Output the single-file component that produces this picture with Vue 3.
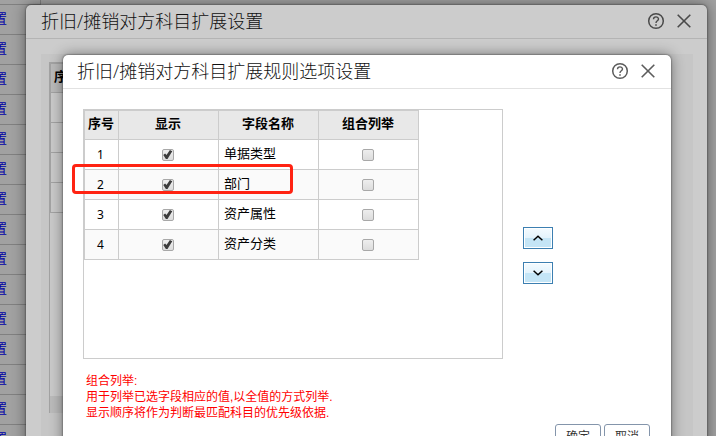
<script setup>
import { ref } from 'vue'

const links = Array.from({ length: 16 }, (_, i) => i)
const fields = ref([
  { name: '单据类型', shown: true, combined: false },
  { name: '部门', shown: true, combined: false },
  { name: '资产属性', shown: true, combined: false },
  { name: '资产分类', shown: true, combined: false },
])
</script>

<template>
  <div class="page">
    <nav class="links">
      <div class="link-row first"></div>
      <div v-for="n in links" :key="n" class="link-row"><a href="#">设置</a></div>
    </nav>

    <section class="dialog outer">
      <header class="bar">
        <h2>折旧/摊销对方科目扩展设置</h2>
        <button class="icon" aria-label="帮助">
          <svg width="18" height="18" viewBox="0 0 18 18" fill="none" stroke="currentColor">
            <circle cx="9" cy="9" r="7.3" stroke-width="1.5" />
            <path d="M6.5 7.3C6.5 4.1 11.5 4.2 11.5 7.1C11.5 8.8 9 8.9 9 11" stroke-width="1.4" />
            <path d="M9 12.2v1.6" stroke-width="1.6" />
          </svg>
        </button>
        <button class="icon" aria-label="关闭">
          <svg width="14" height="14" viewBox="0 0 14 14" fill="none" stroke="currentColor" stroke-width="1.6">
            <path d="M.7 .7L13.3 13.3M13.3 .7L.7 13.3" />
          </svg>
        </button>
      </header>
      <div class="backdrop-panel">
        <div class="backdrop-box">
          <table class="grid">
            <colgroup><col class="no" /><col /></colgroup>
            <thead><tr><th>序号</th><th></th></tr></thead>
            <tbody>
              <tr v-for="n in 4" :key="n"><td></td><td></td></tr>
            </tbody>
          </table>
          <div class="scroll"></div>
        </div>
      </div>
    </section>

    <section class="dialog inner">
      <header class="bar">
        <h2>折旧/摊销对方科目扩展规则选项设置</h2>
        <button class="icon" aria-label="帮助">
          <svg width="18" height="18" viewBox="0 0 18 18" fill="none" stroke="currentColor">
            <circle cx="9" cy="9" r="7.3" stroke-width="1.5" />
            <path d="M6.5 7.3C6.5 4.1 11.5 4.2 11.5 7.1C11.5 8.8 9 8.9 9 11" stroke-width="1.4" />
            <path d="M9 12.2v1.6" stroke-width="1.6" />
          </svg>
        </button>
        <button class="icon" aria-label="关闭">
          <svg width="14" height="14" viewBox="0 0 14 14" fill="none" stroke="currentColor" stroke-width="1.6">
            <path d="M.7 .7L13.3 13.3M13.3 .7L.7 13.3" />
          </svg>
        </button>
      </header>
      <div class="body">
        <div class="main">
          <div class="box">
            <table class="grid fields">
              <colgroup><col class="no" /><col /><col /><col /></colgroup>
              <thead>
                <tr><th>序号</th><th>显示</th><th>字段名称</th><th>组合列举</th></tr>
              </thead>
              <tbody>
                <tr v-for="(f, i) in fields" :key="f.name">
                  <td class="mid num">{{ i + 1 }}</td>
                  <td class="mid"><input v-model="f.shown" type="checkbox" :aria-label="f.name + '显示'" /></td>
                  <td>{{ f.name }}</td>
                  <td class="mid"><input v-model="f.combined" type="checkbox" :aria-label="f.name + '组合列举'" /></td>
                </tr>
              </tbody>
            </table>
            <div class="highlight"></div>
          </div>
          <div class="movers">
            <button aria-label="上移">
              <svg width="10" height="6" viewBox="0 0 10 6" fill="none" stroke="#000" stroke-width="1.5"><path d="M.6 5.2L5 1.2L9.4 5.2" /></svg>
            </button>
            <button aria-label="下移">
              <svg width="10" height="6" viewBox="0 0 10 6" fill="none" stroke="#000" stroke-width="1.5"><path d="M.6 .8L5 4.8L9.4 .8" /></svg>
            </button>
          </div>
        </div>
        <p class="note">组合列举:<br />用于列举已选字段相应的值,以全值的方式列举.<br />显示顺序将作为判断最匹配科目的优先级依据.</p>
        <footer class="actions">
          <button>确定</button>
          <button>取消</button>
        </footer>
      </div>
    </section>
  </div>
</template>

<style>
body { overflow: hidden; }
</style>

<style scoped>
* { box-sizing: border-box; }
.page {
  position: relative;
  height: 100vh;
  overflow: hidden;
  background: #a1a1a1;
  font: 13px/20px "Liberation Sans", "Noto Sans CJK SC", sans-serif;
  color: #000;
}
button { font: inherit; cursor: pointer; padding: 0; }
.links { width: 41px; }
.link-row {
  display: flex;
  justify-content: flex-end;
  align-items: center;
  height: 30px;
  padding: 0 33px 2px 0;
  overflow: hidden;
  border-bottom: 1px solid #808080;
  border-right: 1px solid #808080;
}
.link-row.first { height: 5px; }
.link-row a { flex: none; color: #0000a8; text-decoration: none; }
.dialog {
  position: absolute;
  display: flex;
  flex-direction: column;
  border-radius: 5px;
  box-shadow: 0 0 2px rgba(0, 0, 0, .7), 0 0 14px rgba(0, 0, 0, .45);
}
.outer {
  inset: 5px 9px -40px 26px;
  background: #ccc;
}
.inner {
  inset: 55px 45px auto 63px;
  background: #fff;
}
.bar {
  display: flex;
  align-items: center;
  flex: none;
  height: 34px;
  padding: 0 16px 2px 14px;
  gap: 12px;
  border-bottom: 1px solid #e2e2e2;
}
.outer .bar { border-color: #b4b4b4; padding-left: 15px; }
h2 {
  flex: 1;
  margin: 0;
  font-family: "Open Sans", "Noto Sans CJK SC", sans-serif;
  font-size: 18px;
  font-weight: 300;
  line-height: 26px;
  color: #111;
  white-space: nowrap;
}
.icon {
  display: flex;
  border: 0;
  background: none;
  color: #5c5c5c;
}
.outer .icon { color: #4a4a4a; }
.backdrop-panel {
  flex: 1;
  margin: 15px 14px 0 15px;
  padding: 8px;
  background: #c6c6c6;
}
.backdrop-box {
  display: flex;
  flex-direction: column;
  width: 80%;
  height: 351px;
  border: 1px solid #a3a3a3;
  border-bottom: 0;
  background: #cacaca;
}
.grid {
  table-layout: fixed;
  border-spacing: 0;
  border-top: 1px solid #ccc;
  border-left: 1px solid #ccc;
}
.grid .no { width: 34px; }
.grid th, .grid td {
  height: 30px;
  padding: 0 5px 2px;
  border-right: 1px solid #ccc;
  border-bottom: 1px solid #ccc;
  line-height: 20px;
}
.grid th {
  height: 29px;
  padding: 0 1px 2px 0;
  background: #e8e8e8;
  font-weight: bold;
}
.grid .mid { padding: 0 2px 2px 0; text-align: center; }
.grid .num { padding-bottom: 0; font-family: "Noto Sans", sans-serif; font-size: 12px; }
.fields { width: 335px; background: #fff; }
.fields tbody tr:nth-child(even) { background: #fafafa; }
.backdrop-box .grid { width: 100%; border-color: #a3a3a3; }
.backdrop-box .grid th, .backdrop-box .grid td { border-color: #a3a3a3; }
.backdrop-box .grid th { background: #bababa; }
.scroll { height: 17px; margin-top: auto; background: #bbb; }
.body { padding: 20px; }
.main { display: flex; align-items: center; gap: 20px; }
.box {
  position: relative;
  flex: 0 1 420px;
  height: 250px;
  border: 1px solid #ccc;
}
.highlight {
  position: absolute;
  top: 54px;
  left: -12px;
  width: 221px;
  height: 30px;
  border: 3px solid #ff2312;
  border-radius: 4px;
}
input {
  appearance: none;
  display: block;
  width: 12px;
  height: 12px;
  margin: 2px auto 0;
  border: 1px solid #a8a8a8;
  border-radius: 2px;
  background: linear-gradient(#eee, #dcdcdc);
}
input:checked::before {
  content: "";
  display: block;
  width: 10px;
  height: 10px;
  background: #3c3c3c;
  clip-path: polygon(8% 55%, 26% 40%, 40% 56%, 74% 6%, 98% 18%, 50% 94%, 34% 94%);
}
.movers { display: flex; flex-direction: column; gap: 13px; padding-top: 43px; }
.movers button {
  display: flex;
  align-items: center;
  justify-content: center;
  width: 30px;
  height: 22px;
  border: 1px solid #3c7fb1;
  box-shadow: inset 0 0 0 1px #fff;
  background: linear-gradient(#f4fbff, #e3f3fc 50%, #c4e5f6 50%);
}
.note { margin: 14px 0 0 3px; font-size: 12px; line-height: 16px; color: #f00; }
.actions { display: flex; justify-content: flex-end; gap: 3px; margin-top: 3px; padding-right: 1px; }
.actions button {
  width: 46px;
  height: 25px;
  border: 1px solid #8495ab;
  border-radius: 3px;
  background: #fff;
  color: #333;
  font-size: 12px;
}
</style>
